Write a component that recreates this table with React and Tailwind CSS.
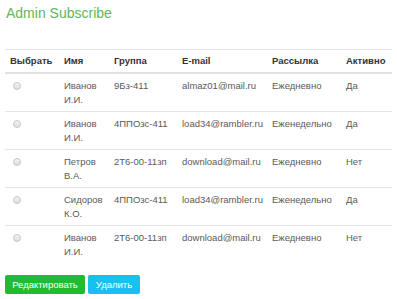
import React from 'react'

const rows = [
    { name: 'Иванов И.И.', group: '9Бз-411', email: 'almaz01@mail.ru', freq: 'Ежедневно', active: 'Да' },
    { name: 'Иванов И.И.', group: '4ППОзс-411', email: 'load34@rambler.ru', freq: 'Еженедельно', active: 'Да' },
    { name: 'Петров В.А.', group: '2Т6-00-11зп', email: 'download@mail.ru', freq: 'Ежедневно', active: 'Нет' },
    { name: 'Сидоров К.О.', group: '4ППОзс-411', email: 'load34@rambler.ru', freq: 'Еженедельно', active: 'Да' },
    { name: 'Иванов И.И.', group: '2Т6-00-11зп', email: 'download@mail.ru', freq: 'Ежедневно', active: 'Нет' },
]

const App = () => {
    return (
        <div className="w-[397px] h-[299px] bg-white px-[5px] pt-[3px] font-['Liberation_Sans',Arial,sans-serif] text-[9.5px] leading-[14px] text-[#5a5a5a]">
            {/* Title */}
            <h2 className="text-[14px] leading-[20px] text-[#5cb85c] ml-[1px]">Admin Subscribe</h2>

            {/* Subscribers table */}
            <table className="mt-[26px] w-[387px] table-fixed border-collapse text-left">
                <colgroup>
                    <col className="w-[54px]" />
                    <col className="w-[50px]" />
                    <col className="w-[68px]" />
                    <col className="w-[90px]" />
                    <col className="w-[74px]" />
                    <col className="w-[51px]" />
                </colgroup>
                <thead>
                    <tr className="border-t border-[#e6e6e6] border-b-2 border-b-[#e2e2e2]">
                        <th className="px-[5px] py-[4px] font-bold text-[#333]">Выбрать</th>
                        <th className="px-[5px] py-[4px] font-bold text-[#333]">Имя</th>
                        <th className="px-[5px] py-[4px] font-bold text-[#333]">Группа</th>
                        <th className="px-[5px] py-[4px] font-bold text-[#333]">E-mail</th>
                        <th className="px-[5px] py-[4px] font-bold text-[#333]">Рассылка</th>
                        <th className="px-[5px] py-[4px] font-bold text-[#333]">Активно</th>
                    </tr>
                </thead>
                <tbody>
                    {rows.map((r, i) => (
                        <tr key={i} className={i < rows.length - 1 ? 'border-b border-[#e6e6e6]' : ''}>
                            <td className="px-[5px] pt-[5px] pb-[4px] align-top">
                                <span className="mt-[3px] ml-[3px] block w-[8px] h-[8px] rounded-full border border-[#c8c8c8] bg-gradient-to-b from-[#f4f4f4] to-[#dcdcdc]" />
                            </td>
                            <td className="px-[5px] pt-[5px] pb-[4px] align-top">{r.name}</td>
                            <td className="px-[5px] pt-[5px] pb-[4px] align-top whitespace-nowrap">{r.group}</td>
                            <td className="px-[5px] pt-[5px] pb-[4px] align-top whitespace-nowrap">{r.email}</td>
                            <td className="px-[5px] pt-[5px] pb-[4px] align-top whitespace-nowrap">{r.freq}</td>
                            <td className="px-[5px] pt-[5px] pb-[4px] align-top">{r.active}</td>
                        </tr>
                    ))}
                </tbody>
            </table>

            {/* Actions */}
            <div className="mt-[12px] flex gap-[3px]">
                <button className="w-[80px] h-[19px] rounded-[2px] bg-[#1fbb35] text-white text-[9.5px]">Редактировать</button>
                <button className="w-[52px] h-[19px] rounded-[2px] bg-[#18c0ef] text-white text-[9.5px]">Удалить</button>
            </div>
        </div>
    )
}

export default App
